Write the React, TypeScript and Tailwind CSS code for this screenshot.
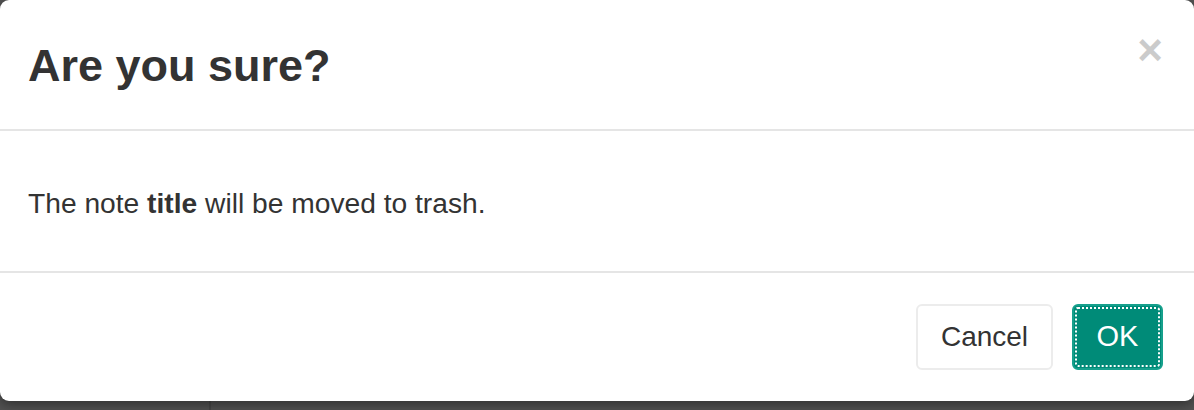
import React from 'react';

export default function App() {
  return (
    <div className="relative w-[1194px] h-[410px] overflow-hidden bg-[#525252] font-['Liberation_Sans',Arial,sans-serif] text-[#333]">
      {/* app behind the backdrop */}
      <div className="flex h-full">
        <div className="w-[211px] h-full border-r-2 border-[#474747]"></div>
        <div className="flex-1 h-full"></div>
      </div>

      {/* modal */}
      <div className="absolute left-0 top-0 w-[1194px] h-[401px] rounded-[9px] bg-white shadow-[0_4px_12px_rgba(0,0,0,0.4)] flex flex-col">
        <div className="relative h-[131px] border-b-2 border-[#e5e5e5] pl-[28px] pr-[30px] pt-[32px]">
          <h4 className="text-[45px] leading-[68px] font-bold">Are you sure?</h4>
          <button className="absolute right-[31px] top-[22px] text-[44px] leading-[56px] font-bold text-black opacity-20">
            ×
          </button>
        </div>
        <div className="h-[142px] border-b-2 border-[#e5e5e5] px-[28px] pt-[52px]">
          <p className="text-[28.2px] leading-[40px]">
            The note <b>title</b> will be moved to trash.
          </p>
        </div>
        <div className="flex-1 flex items-start justify-end gap-[19px] pr-[31px] pt-[31px]">
          <button className="h-[66px] w-[137px] rounded-[6px] border-2 border-[#ececec] bg-white text-[28px] text-[#333]">
            Cancel
          </button>
          <button className="h-[66px] w-[91px] rounded-[6px] border-2 border-[#16a08c] bg-[#008b78] text-[29px] text-white outline-2 outline-dotted outline-white outline-offset-[-5px]">
            OK
          </button>
        </div>
      </div>
    </div>
  );
}
